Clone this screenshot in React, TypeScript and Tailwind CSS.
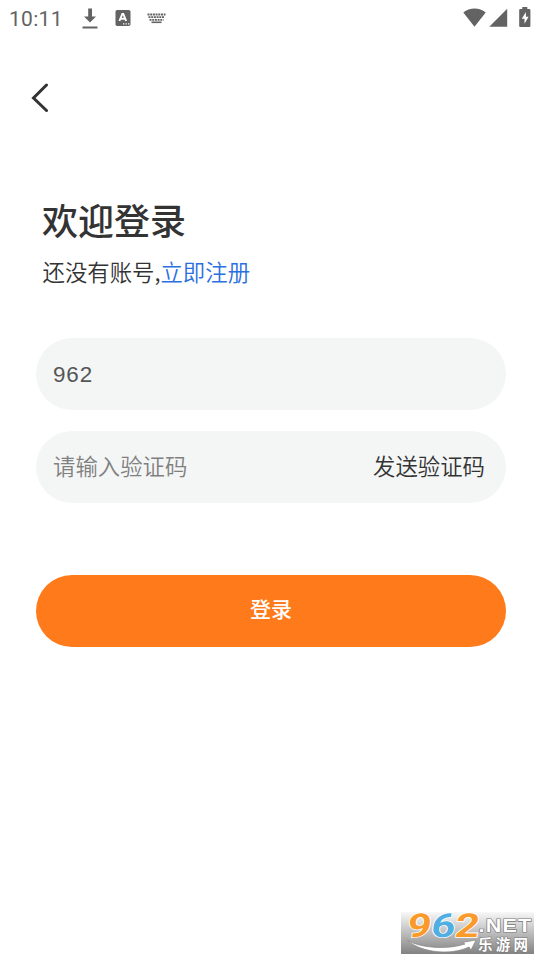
import { useState } from "react";

function StatusBar() {
  return (
    <div className="flex h-9 items-center justify-between px-[9px] text-[#636363]">
      <div className="flex items-center">
        <span className="w-[73px] pt-px font-['Roboto',sans-serif] text-[21px] leading-9 tracking-[0.3px]">
          10:11
        </span>
        <svg width="16" height="22" viewBox="0 0 16 22" fill="currentColor">
          <path d="M6.200 1.500h3.800v8h4L8 15.500 2 9.500h4.200zM0.500 19.500h15v2h-15z" />
        </svg>
        <svg className="ml-[17px]" width="16" height="18" viewBox="0 0 16 18">
          <rect x="0.5" y="1" width="15" height="16" rx="1.8" fill="currentColor" />
          <path d="M4.400 12 7.300 5h1l2.900 7M5.600 9.700h4.400" fill="none" stroke="#fff" strokeWidth="1.900" />
          <path d="M8 14.3h1.3v1.3H8zM10.5 14.3h1.3v1.3h-1.3zM13 14.3h1.3v1.3H13z" fill="#fff" />
        </svg>
        <svg className="ml-4" width="19" height="12" viewBox="0 0 19 12" stroke="currentColor" fill="none">
          <path d="M0.500 2.500h18" strokeWidth="1.800" strokeDasharray="2 0.700" />
          <path d="M1.500 5.200h16" strokeWidth="1.800" strokeDasharray="2 0.700" />
          <path d="M2.500 7.900h14" strokeWidth="1.800" strokeDasharray="2 0.700" />
          <path d="M4.500 10.300h10" strokeWidth="1.600" />
        </svg>
      </div>
      <div className="flex items-center">
        <svg width="23" height="20" viewBox="0 0 23 20" fill="currentColor">
          <path d="M0.300 4.500C6.500-0.800 16.500-0.800 22.700 4.500L11.500 18.800z" />
        </svg>
        <svg className="ml-[3px]" width="19" height="20" viewBox="0 0 19 20" fill="currentColor">
          <path d="M18.200 0.800v18H0.300z" />
        </svg>
        <svg className="mb-0.5 ml-[11px]" width="12" height="20" viewBox="0 0 12 20">
          <path
            d="M3.300 0h5v2h1.900c.7 0 1.200.5 1.200 1.200v15.500c0 .7-.5 1.300-1.200 1.300H1.400c-.7 0-1.200-.6-1.200-1.300V3.200C.2 2.500.7 2 1.400 2h1.900z"
            fill="currentColor"
          />
          <path d="M6.900 5 2.800 11.700h2.700v5.100l4.100-7H6.900z" fill="#fff" />
        </svg>
      </div>
    </div>
  );
}

function SiteBadge() {
  return (
    <svg
      className="absolute left-[401px] top-[912px] overflow-visible"
      width="133"
      height="42"
      viewBox="0 0 133 42"
    >
      <defs>
        <linearGradient id="badge" x1="0" y1="0" x2="0" y2="1">
          <stop offset="0" stopColor="#f8f8f8" />
          <stop offset="0.5" stopColor="#bdbdbd" />
          <stop offset="1" stopColor="#828282" />
        </linearGradient>
      </defs>
      <rect width="133" height="42" fill="url(#badge)" />
      <path
        d="M6.500 28.500C20 36 46 38 64 32l-3-1.500 14-2.500-5 10-2-3C50 43.500 21 41 6.500 28.500z"
        fill="#fff"
        stroke="#858585"
        strokeWidth="0.700"
      />
      <text
        transform="translate(5 25) skewX(-8)"
        textLength="72"
        lengthAdjust="spacingAndGlyphs"
        fontFamily="Roboto, sans-serif"
        fontWeight="700"
        fontSize="33"
        stroke="#fff"
        strokeWidth="1.500"
        paintOrder="stroke"
      >
        <tspan fill="#f99a2b">9</tspan>
        <tspan fill="#51aee2">6</tspan>
        <tspan fill="#f99a2b">2</tspan>
      </text>
      <text
        x="77.500"
        y="19.500"
        textLength="54"
        lengthAdjust="spacingAndGlyphs"
        letterSpacing="1"
        fontFamily="'Liberation Sans', sans-serif"
        fontWeight="700"
        fontSize="18"
        fill="#fff"
        stroke="#777"
        strokeWidth="1.200"
        paintOrder="stroke"
      >
        .NET
      </text>
      <text
        x="77"
        y="37.500"
        textLength="50"
        fontFamily="'Noto Sans CJK SC', sans-serif"
        fontWeight="700"
        fontSize="14.500"
        fill="#fff"
        stroke="#777"
        strokeWidth="1"
        paintOrder="stroke"
      >
        乐游网
      </text>
    </svg>
  );
}

export default function App() {
  const [account, setAccount] = useState("962");
  const [code, setCode] = useState("");

  return (
    <div className="relative h-[960px] w-[540px] overflow-hidden bg-white font-['Liberation_Sans','Noto_Sans_CJK_SC',sans-serif] text-[#333]">
      <StatusBar />
      <header className="flex h-[124px] items-center pl-[30px]">
        <button aria-label="返回">
          <svg width="20" height="30" viewBox="0 0 20 30" fill="none" stroke="#333" strokeWidth="3">
            <path d="M16.500 2 3.500 15l13 12.500" strokeLinecap="round" />
          </svg>
        </button>
      </header>
      <main className="pl-9 pr-[34px] pt-[33px]">
        <div className="pl-1.5">
          <h1 className="font-['Noto_Sans_CJK_SC',sans-serif] text-[36px] font-medium leading-[52px]">欢迎登录</h1>
          <p className="mt-[10px] pl-[0.5px] font-['Noto_Sans_CJK_SC',sans-serif] text-[22.400px] font-[350] leading-8">
            还没有账号,<a className="text-[#2b6fe0]">立即注册</a>
          </p>
        </div>
        <div className="mt-[51px] flex h-[72px] items-center rounded-full bg-[#f4f6f6] px-[17px]">
          <input
            className="w-full bg-transparent pt-px font-['Liberation_Sans',sans-serif] text-[22.400px] tracking-[0.9px] text-[#555] outline-none"
            value={account}
            onChange={(e) => setAccount(e.target.value)}
          />
        </div>
        <div className="mt-[21px] flex h-[72px] items-center rounded-full bg-[#f4f6f6] pb-0.5 pl-[17px] pr-[21px] font-['Noto_Sans_CJK_SC',sans-serif]">
          <input
            className="min-w-0 flex-1 bg-transparent text-[22.400px] font-[350] outline-none placeholder:text-[#808080]"
            placeholder="请输入验证码"
            value={code}
            onChange={(e) => setCode(e.target.value)}
          />
          <button className="text-[22.400px] font-[350]">发送验证码</button>
        </div>
        <button className="mt-[72px] h-[72px] w-full rounded-full bg-[#ff7a1a] pb-[4px] font-['Noto_Sans_CJK_SC',sans-serif] text-[21px] font-medium text-white">
          登录
        </button>
      </main>
      <SiteBadge />
    </div>
  );
}
